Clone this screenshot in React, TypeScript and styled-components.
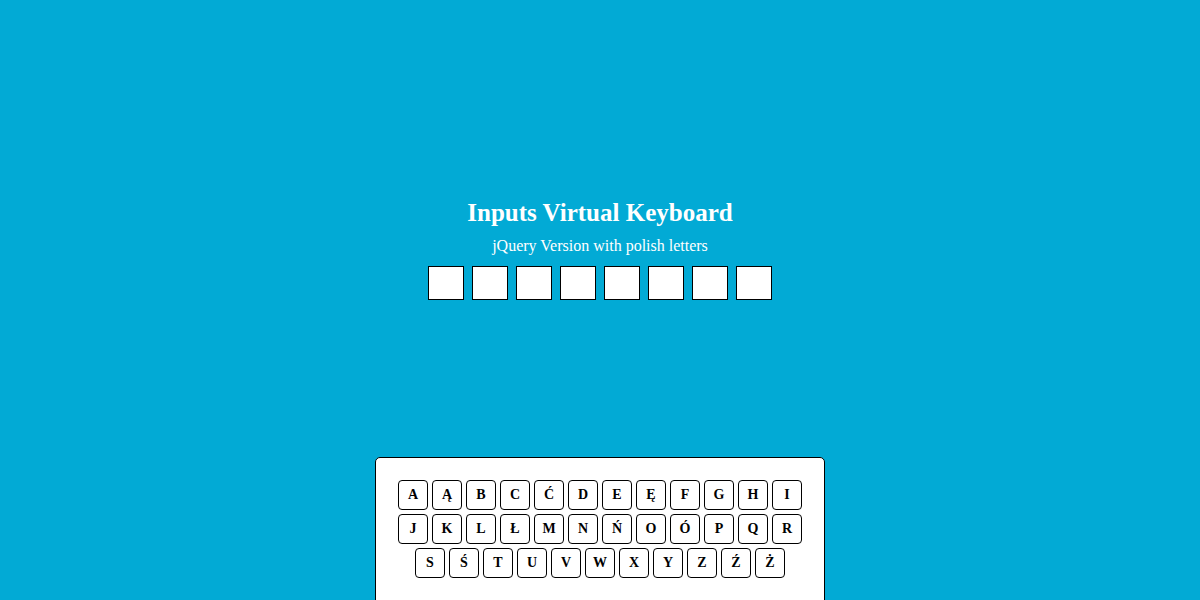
import React from "react";
import styled, { createGlobalStyle } from "styled-components";

const Global = createGlobalStyle`
  html, body { margin: 0; padding: 0; }
  body {
    background: #02aad5;
    font-family: "Liberation Serif", "Times New Roman", serif;
    overflow: hidden;
  }
`;

const Page = styled.div`
  width: 1200px;
  height: 600px;
  display: flex;
  flex-direction: column;
  align-items: center;
  overflow: hidden;
`;

const Header = styled.header`
  margin-top: 199px;
  display: flex;
  flex-direction: column;
  align-items: center;
  color: #fff;
`;

const Title = styled.h1`
  margin: 0;
  font-size: 25px;
  font-weight: bold;
  line-height: 28px;
`;

const Subtitle = styled.p`
  margin: 9px 0 0;
  font-size: 16px;
  line-height: 20px;
`;

const Inputs = styled.div`
  margin-top: 10px;
  display: flex;
  gap: 8px;
`;

const Box = styled.input`
  box-sizing: border-box;
  width: 36px;
  height: 34px;
  margin: 0;
  padding: 0;
  border: 1px solid #000;
  background: #fff;
  text-align: center;
  font-family: inherit;
  font-size: 18px;
  outline: none;
`;

const Keyboard = styled.div`
  margin-top: 157px;
  box-sizing: border-box;
  width: 450px;
  min-height: 200px;
  background: #fff;
  border: 1px solid #000;
  border-radius: 5px 5px 0 0;
  padding: 22px 0;
  display: flex;
  flex-direction: column;
  align-items: center;
  gap: 4px;
`;

const Row = styled.div`
  display: flex;
  gap: 4px;
`;

const Key = styled.button`
  box-sizing: border-box;
  width: 30px;
  height: 30px;
  margin: 0;
  padding: 0;
  border: 1px solid #000;
  border-radius: 4px;
  background: #fff;
  color: #000;
  font-family: "Liberation Serif", "Times New Roman", serif;
  font-weight: bold;
  font-size: 14px;
  display: flex;
  align-items: center;
  justify-content: center;
  cursor: pointer;
`;

const rows = [
  ["A", "Ą", "B", "C", "Ć", "D", "E", "Ę", "F", "G", "H", "I"],
  ["J", "K", "L", "Ł", "M", "N", "Ń", "O", "Ó", "P", "Q", "R"],
  ["S", "Ś", "T", "U", "V", "W", "X", "Y", "Z", "Ź", "Ż"],
];

export default function App() {
  return (
    <>
      <Global />
      <Page>
        <Header>
          <Title>Inputs Virtual Keyboard</Title>
          <Subtitle>jQuery Version with polish letters</Subtitle>
          <Inputs>
            {Array.from({ length: 8 }).map((_, i) => (
              <Box key={i} maxLength={1} />
            ))}
          </Inputs>
        </Header>
        <Keyboard>
          {rows.map((r, i) => (
            <Row key={i}>
              {r.map((k) => (
                <Key key={k}>{k}</Key>
              ))}
            </Row>
          ))}
        </Keyboard>
      </Page>
    </>
  );
}
